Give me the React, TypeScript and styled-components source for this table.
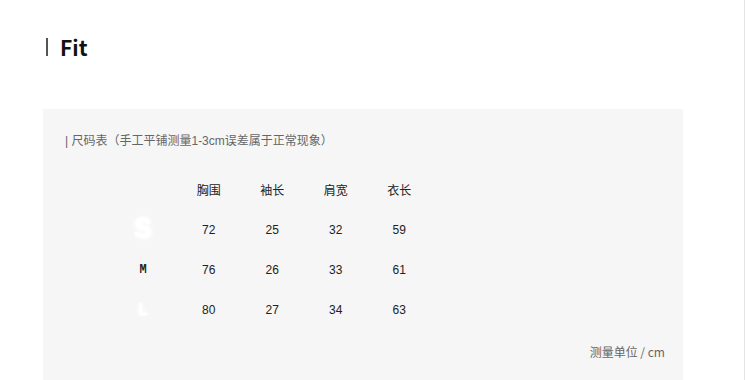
import styled, { createGlobalStyle } from 'styled-components'

const GlobalStyle = createGlobalStyle`
  html, body {
    margin: 0;
    padding: 0;
    background: #fff;
  }
  body {
    font-family: 'Liberation Sans', 'Noto Sans CJK SC', sans-serif;
    overflow: hidden;
  }
`

const Page = styled.div`
  width: 745px;
  min-height: 380px;
  border-right: 1px solid #e4e4e4;
  box-sizing: border-box;
  padding: 36px 61px 0 43px;
`

const Title = styled.h2`
  display: flex;
  align-items: center;
  gap: 12px;
  margin: 0 0 51px;
  padding-left: 3px;
  height: 22px;
  font-family: 'Noto Sans CJK SC', sans-serif;
  font-size: 21px;
  font-weight: 700;
  color: #111;
  line-height: 22px;
  &::before {
    content: '';
    display: block;
    width: 2px;
    height: 18px;
    background: #555;
  }
`

const Panel = styled.section`
  background: #f6f6f6;
  padding: 24px 17px 40px 22px;
`

const Caption = styled.div`
  font-family: 'Liberation Sans', 'Noto Sans CJK SC', sans-serif;
  font-size: 12px;
  line-height: 16px;
  color: #666;
`

const Table = styled.div`
  display: grid;
  grid-template-columns: 68px repeat(4, 63.5px);
  grid-template-rows: 42px;
  grid-auto-rows: 40px;
  margin: 19px 0 0 44px;
`

const Cell = styled.div`
  display: flex;
  align-items: center;
  justify-content: center;
  font-family: 'Liberation Sans', 'Noto Sans CJK SC', sans-serif;
  font-size: 12px;
  color: #222;
`

const SizeLabel = styled(Cell)<{ $ghost?: boolean; $size?: number }>`
  font-family: 'Liberation Mono', monospace;
  font-weight: 700;
  font-size: ${(p) => p.$size ?? 12}px;
  color: ${(p) => (p.$ghost ? '#fff' : '#222')};
  text-shadow: ${(p) =>
    p.$ghost ? '0 0 2px #fff, 0 0 4px #fff, 0 0 6px #fff' : 'none'};
`

const Footer = styled.div`
  margin-top: 14px;
  padding-right: 1px;
  text-align: right;
  font-size: 12px;
  line-height: 16px;
  color: #666;
  font-family: 'Noto Sans CJK SC', sans-serif;
`

const headers = ['胸围', '袖长', '肩宽', '衣长']
const rows = [
  { size: 'S', ghost: true, px: 30, values: [72, 25, 32, 59] },
  { size: 'M', ghost: false, px: 12, values: [76, 26, 33, 61] },
  { size: 'L', ghost: true, px: 18, values: [80, 27, 34, 63] },
]

export default function App() {
  return (
    <Page>
      <GlobalStyle />
      <Title>Fit</Title>
      <Panel>
        <Caption>| 尺码表（手工平铺测量1-3cm误差属于正常现象）</Caption>
        <Table>
          <Cell />
          {headers.map((h) => (
            <Cell key={h}>{h}</Cell>
          ))}
          {rows.map((r) => [
            <SizeLabel key={r.size} $ghost={r.ghost} $size={r.px}>
              {r.size}
            </SizeLabel>,
            ...r.values.map((v, i) => <Cell key={r.size + i}>{v}</Cell>),
          ])}
        </Table>
        <Footer>测量单位 / cm</Footer>
      </Panel>
    </Page>
  )
}
